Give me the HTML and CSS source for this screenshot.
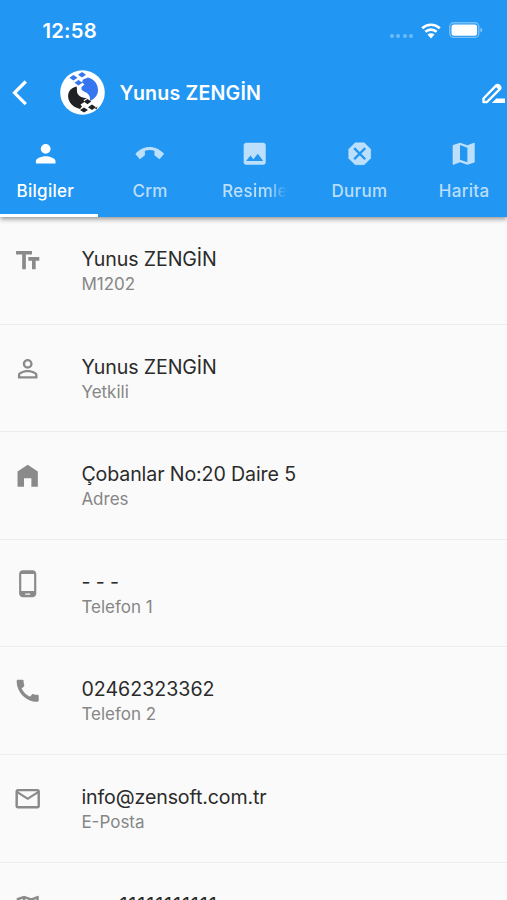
FILE: index.html
```html
<!DOCTYPE html>
<html lang="tr">
<head>
<meta charset="utf-8">
<title>Yunus ZENGİN</title>
<link rel="stylesheet" href="styles.css">
</head>
<body>
<div class="screen">
<header class="header">
  <div class="status">
    <span class="clock">12:58</span>
    <span class="signal"><i></i><i></i><i></i><i></i></span>
    <svg class="wifi" viewBox="0 0 20 16"><path d="M1.2 5.2a13 13 0 0 1 17.6 0M4.4 8.8a8.2 8.2 0 0 1 11.2 0" fill="none" stroke="#fff" stroke-width="2.7"/><path d="M6.5 11.6a5 5 0 0 1 7 0L10 15.4z" fill="#fff"/></svg>
    <svg class="battery" viewBox="0 0 34 17"><rect x=".8" y=".8" width="29" height="14.6" rx="4" fill="none" stroke="#fff" stroke-opacity=".4" stroke-width="1.4"/><rect x="2.5" y="2.5" width="25.6" height="11.2" rx="2.5" fill="#fff"/><path d="M31.4 5.7q2 .6 2 2.4t-2 2.4z" fill="#fff" fill-opacity=".45"/></svg>
  </div>
  <div class="bar">
    <svg class="back" viewBox="0 0 16 26"><path d="M14.800 1.500 3.500 12.800l11.300 11.300" fill="none" stroke="#fff" stroke-width="3.200"/></svg>
    <svg class="avatar" viewBox="0 0 45 45">
      <circle cx="22.5" cy="22.5" r="22.3" fill="#fff"/>
      <path d="M23 9.500l5-2c6 1.500 10 6.500 10 12.500 0 4.500-2.500 8.500-8 11 .5-5-1.500-7.500-5-9-3-1.200-4-2.500-3.500-5l3-2.500-2.500-2z" fill="#3576f0"/>
      <path d="M16.500 16.500C10 18 7 23 8.500 29c1.700 5.500 6 8.500 11.500 10l2-2.500-1.500-2 4-2.500-1-2 3.500-1.500c-6-1-9.500-3-10-7-.2-2 .2-3.500-.5-5z" fill="#202124"/>
      <g fill="#3576f0"><path d="m13.500 5 4 2.800-4 2.800L9.300 7.800zM22 2l4 2.700-4 2.700-4-2.700zM18.500 10l4 2.800-4 2.700-4-2.700z"/></g>
      <g fill="#202124"><path d="m27.500 29 3.700 2.600-3.700 2.600-3.700-2.600zM32 34.500l4 2.700-4 2.700-4-2.700zM24 37.500l4 2.600-4 2.500-4-2.500zM35 38.500l2.500-2-1 3z"/></g>
    </svg>
    <h1 class="heading">Yunus ZENGİN</h1>
    <svg class="edit" viewBox="0 0 24 24"><path d="M2.500 17.500V21H6L18.300 8.700q1.900-1.900.2-3.700t-3.700-.2z" fill="none" stroke="#fff" stroke-width="2.400" stroke-linejoin="round"/><path d="m14 5 4 4 1.500-2-3-3.500zM15.300 17.500H24V22H10.800z" fill="#fff"/></svg>
  </div>
  <nav class="tabs">
    <a class="tab active"><svg class="icon" viewBox="0 0 24 24"><path d="M12 12c2.210 0 4-1.790 4-4s-1.790-4-4-4-4 1.790-4 4 1.790 4 4 4zm0 2c-2.670 0-8 1.340-8 4v2h16v-2c0-2.660-5.330-4-8-4z"/></svg><span>Bilgiler</span></a>
    <a class="tab"><svg class="icon" viewBox="0 0 24 24"><path d="M.3 12.200C6.600 4.600 17.400 4.600 23.700 12.200L20 16.500 15.900 13.300V9.500Q12 8.300 8.100 9.500v3.800L4 16.500z"/></svg><span>Crm</span></a>
    <a class="tab"><svg class="icon" viewBox="0 0 24 24"><path d="M21 19V5c0-1.100-.9-2-2-2H5c-1.100 0-2 .9-2 2v14c0 1.100.9 2 2 2h14c1.100 0 2-.9 2-2zM8.500 13.500l2.500 3.010L14.500 12l4.500 6H5l3.500-4.500z"/></svg><span class="clip">Resimler</span></a>
    <a class="tab"><svg class="icon" viewBox="0 0 24 24"><path d="M8.300 3h7.400L21 8.300v7.400L15.700 21H8.300L3 15.700V8.300z" stroke="currentColor" stroke-width=".3" stroke-linejoin="round"/><path class="cross" d="m7.500 7.500 9 9m0-9-9 9"/></svg><span>Durum</span></a>
    <a class="tab"><svg class="icon" viewBox="0 0 24 24"><path d="M20.500 3l-.16.030L15 5.100 9 3 3.360 4.900c-.21.070-.36.250-.36.480V20.500c0 .28.220.5.500.5l.16-.030L9 18.900l6 2.100 5.640-1.900c.21-.070.36-.25.36-.48V3.500c0-.28-.22-.5-.5-.5zM15 19l-6-2.110V5l6 2.110V19z"/></svg><span>Harita</span></a>
  </nav>
</header>
<main class="list">
  <section class="row"><svg class="icon" viewBox="0 0 24 24"><path d="M2.500 4v3h5v12h3V7h5V4h-13zm19 5h-9v3h3v7h3v-7h3V9z"/></svg><div><p class="title">Yunus ZENGİN</p><p class="sub">M1202</p></div></section>
  <section class="row"><svg class="icon" viewBox="0 0 24 24"><path d="M12 5.900a2.100 2.100 0 1 1 0 4.200 2.100 2.100 0 0 1 0-4.200m0 9c2.970 0 6.100 1.460 6.100 2.100v1.100H5.900V17c0-.64 3.130-2.100 6.100-2.100M12 4C9.790 4 8 5.790 8 8s1.790 4 4 4 4-1.790 4-4-1.790-4-4-4zm0 9c-2.670 0-8 1.340-8 4v3h16v-3c0-2.660-5.330-4-8-4z"/></svg><div><p class="title">Yunus ZENGİN</p><p class="sub">Yetkili</p></div></section>
  <section class="row"><svg class="icon" viewBox="0 0 24 24"><path d="M12 3 3.700 8.500V21H9v-7h6v7h5.300V8.500z"/></svg><div><p class="title">Çobanlar No:20 Daire 5</p><p class="sub">Adres</p></div></section>
  <section class="row"><svg class="icon" viewBox="0 0 24 24"><path d="M16 1H8C6.340 1 5 2.340 5 4v16c0 1.660 1.340 3 3 3h8c1.660 0 3-1.340 3-3V4c0-1.660-1.340-3-3-3zm-2 20h-4v-1h4v1zm3.250-3H6.750V4h10.500v14z"/></svg><div><p class="title">- - -</p><p class="sub">Telefon 1</p></div></section>
  <section class="row"><svg class="icon" viewBox="0 0 24 24"><path d="M20.010 15.380c-1.230 0-2.420-.2-3.530-.56-.35-.12-.74-.030-1.010.24l-1.570 1.970c-2.830-1.350-5.480-3.900-6.890-6.830l1.950-1.660c.27-.28.350-.67.240-1.020-.37-1.110-.56-2.300-.56-3.530 0-.54-.45-.99-.99-.99H4.190C3.650 3 3 3.240 3 3.990 3 13.280 10.730 21 20.010 21c.71 0 .99-.63.99-1.180v-3.450c0-.54-.45-.99-.99-.99z"/></svg><div><p class="title phone">02462323362</p><p class="sub">Telefon 2</p></div></section>
  <section class="row"><svg class="icon" viewBox="0 0 24 24"><path d="M20 4H4c-1.100 0-2 .9-2 2v12c0 1.100.9 2 2 2h16c1.100 0 2-.9 2-2V6c0-1.100-.9-2-2-2zm0 14H4V8l8 5 8-5v10zm-8-7L4 6h16l-8 5z"/></svg><div><p class="title">info@zensoft.com.tr</p><p class="sub">E-Posta</p></div></section>
  <section class="row"><svg class="icon" viewBox="0 0 24 24"><path d="M20.500 3l-.16.030L15 5.100 9 3 3.360 4.900c-.21.070-.36.250-.36.480V20.500c0 .28.220.5.500.5l.16-.030L9 18.900l6 2.100 5.640-1.900c.21-.070.36-.25.360-.48V3.500c0-.28-.22-.5-.5-.5zM10 5.470l4 1.400v11.660l-4-1.400V5.470zm-5 .99l3-1.010v11.700l-3 1.160V6.460zm14 11.080l-3 1.010V6.860l3-1.160v11.840z"/></svg><div><p class="title">- - -<span class="ones">11111111111</span></p></div></section>
</main>
</div>
</body>
</html>
```
FILE: styles.css
```css
* { box-sizing: border-box; }
body { margin: 0; background: #fafafa; font-family: Inter, "Liberation Sans", sans-serif; }
h1, p { margin: 0; }
svg { display: block; flex: none; }
.screen { height: 900px; overflow: hidden; display: flex; flex-direction: column; }
.header { position: relative; z-index: 1; flex: none; height: 217px; background: #2196f3; color: #fff; box-shadow: 0 2px 5px rgba(0, 0, 0, .42); }
.status { display: flex; align-items: center; height: 61px; padding: 0 24px 0 42.5px; }
.clock { flex: 1; font-size: 20.3px; font-weight: 600; letter-spacing: .2px; }
.signal { display: flex; gap: 2.4px; margin: 11px 8px 0 0; }
.signal i { width: 4px; height: 4px; border-radius: 50%; background: rgba(255, 255, 255, .35); }
.wifi { width: 20px; height: 16px; margin-right: 8px; }
.battery { width: 34px; height: 17px; }
.bar { display: flex; align-items: center; height: 63px; padding-left: 11px; overflow: hidden; }
.back { width: 16px; height: 26px; }
.avatar { width: 45px; height: 45px; margin-left: 33px; }
.heading { flex: 1; margin-left: 14.5px; font-size: 19.6px; line-height: 24px; font-weight: 600; letter-spacing: .18px; white-space: nowrap; }
.edit { width: 24px; height: 24px; margin-right: 2px; }
.tabs { display: flex; height: 93px; margin-left: -7px; overflow: hidden; }
.tab { flex: 0 0 104.7px; height: 93px; padding-top: 15px; display: flex; flex-direction: column; align-items: center; color: rgba(255, 255, 255, .7); font-size: 17px; line-height: 22px; font-weight: 500; letter-spacing: .3px; }
.tab.active { color: #fff; border-bottom: 3px solid #fff; }
.tab span { margin-top: 12px; }
.icon { width: 29.4px; height: 29.4px; fill: currentColor; }
.cross { fill: none; stroke: #2196f3; stroke-width: 1.9; }
.clip { width: 65px; overflow: hidden; -webkit-mask-image: linear-gradient(90deg, #000 70%, transparent); mask-image: linear-gradient(90deg, #000 70%, transparent); }
.list { flex: 1; min-height: 0; overflow: hidden; }
.row { display: flex; height: 107.6px; padding: 29px 0 0 12.5px; gap: 39.5px; border-bottom: 1px solid #ededed; color: #8a8a8a; }
.title { color: #2b2b2b; font-size: 19.6px; line-height: 26px; letter-spacing: -.12px; white-space: nowrap; }
.phone { letter-spacing: 0; }
.ones { margin-left: .6px; letter-spacing: .95px; }
.sub { font-size: 17px; line-height: 24px; color: #868686; }
```
